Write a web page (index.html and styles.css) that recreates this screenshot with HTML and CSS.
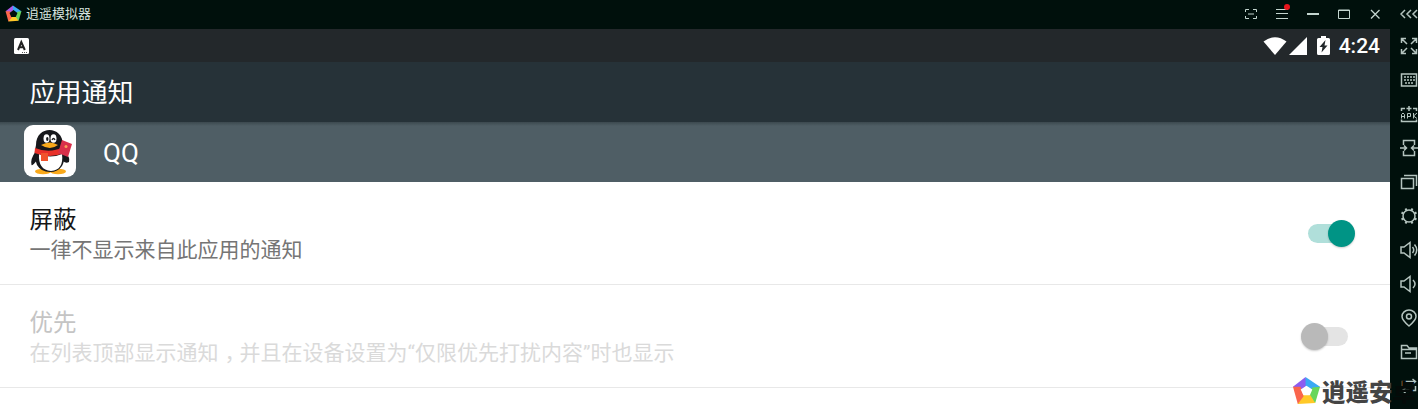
FILE: index.html
```html
<!DOCTYPE html>
<html lang="zh-CN">
<head>
  <meta charset="UTF-8" />
  <title>逍遥模拟器</title>
  <link rel="stylesheet" href="styles.css">
</head>
<body>

  <div id="emulator">
    <div id="main">
      <div id="titlebar">
        <svg class="logo" viewBox="0 0 30 30">
          <path fill="#ad5ae8" d="M14 1 L1 11 L9 15 L16 9 Z"/>
          <path fill="#39a9f4" d="M14 1 L29 11 L23 17 L14 9 Z"/>
          <path fill="#67d65a" d="M29 11 L24 28 L16 23 L22 12 Z"/>
          <path fill="#ffc928" d="M24 28 L6 29 L8 20 L19 21 Z"/>
          <path fill="#fa654c" d="M6 29 L1 11 L9 11 L12 22 Z"/>
          <path fill="#00100c" d="M15 9 L22 14 L19 21 L11 21 L8 14 Z"/>
        </svg>
        <span class="name">逍遥模拟器</span>
        <div class="window-buttons">
          <svg viewBox="0 0 14 14"><path d="M1.500 5V2.500H5M9 2.500h3.500V5M12.500 9v2.500H9M5 11.500H1.500V9M4 7h6"/></svg>
          <svg viewBox="0 0 14 14"><path d="M1 2.500h12M1 6.500h12M1 11.500h12"/></svg>
          <svg viewBox="0 0 14 14"><path class="thick" d="M1 7h12"/></svg>
          <svg viewBox="0 0 14 14"><path d="M1.500 3h11v8.500h-11zM1.500 3.500h11"/></svg>
          <svg viewBox="0 0 14 14"><path class="cross" d="M3 3l8.500 8.500M11.500 3l-8.500 8.500"/></svg>
          <i class="dot"></i>
        </div>
      </div>

      <div id="statusbar">
        <svg class="input-icon" viewBox="0 0 15 16">
          <rect width="15" height="16" rx="1.500" fill="#fff"/>
          <path d="M4 12 L7.300 4 L10.800 12 M5.300 9.200h4" fill="none" stroke="#222" stroke-width="2"/>
          <path d="M8 14.500h1M10 14.500h1M12 14.500h1" stroke="#555"/>
        </svg>
        <div class="status-icons">
          <svg width="24" height="18" viewBox="0 0 24 18"><path d="M0.500 4.500 Q12 -4 23.500 4.500 L12 18 Z"/></svg>
          <svg width="18" height="18" viewBox="0 0 18 18"><path d="M18 0V18H0Z"/></svg>
          <svg class="battery" width="13" height="19" viewBox="0 0 13 19">
            <path d="M4 0h5v2h2.500q1.500 0 1.500 1.500V17.500q0 1.500-1.500 1.500h-10Q0 19 0 17.500V3.500Q0 2 1.500 2H4z"/>
            <path fill="#23282b" d="M8.500 4 L2.500 11H5.500L4.500 16.500L10.500 9.500H7.500Z"/>
          </svg>
          <span>4:24</span>
        </div>
      </div>

      <div id="header">应用通知</div>

      <div id="app">
        <svg class="app-icon" viewBox="0 0 52 52">
          <rect width="52" height="52" rx="9" fill="#fff"/>
          <ellipse cx="19" cy="46.500" rx="8" ry="2.700" fill="#f9a91b"/>
          <ellipse cx="34" cy="46.500" rx="8" ry="2.700" fill="#f9a91b"/>
          <path fill="#17181c" d="M12 26Q6 34 7.500 40Q9 41 13 35zM39 26Q47 32 45 37Q42 39 39 36z"/>
          <path fill="#17181c" d="M12 20C12 0 39 0 39 20C42 27 41 36 38 41Q34 47 26 47Q17 47 13 40Q9 31 12 20z"/>
          <path fill="#fff" d="M15 29Q26 34 38 29Q40 45 27 46Q14 45 15 29z"/>
          <ellipse cx="22.500" cy="13.500" rx="3" ry="4.300" fill="#fff"/>
          <ellipse cx="29.500" cy="13.500" rx="3" ry="4.300" fill="#fff"/>
          <ellipse cx="23.300" cy="14" rx="1.200" ry="2" fill="#17181c"/>
          <path d="M28 15q1.500-3 3 0" fill="none" stroke="#17181c" stroke-width="1.300"/>
          <path fill="#f9a91b" d="M17 20Q26 15 34 20Q26 26 17 20z"/>
          <path fill="#e83029" d="M11 23Q26 29 39 22L40 28Q26 34 10.500 28z"/>
          <path fill="#f0532d" d="M17 28h7v8h-7z"/>
          <path fill="#d9304b" d="M38 15L48 19L44 32L34 28z"/>
          <circle cx="42" cy="21.500" r="1.500" fill="#f9a05b"/>
        </svg>
        <span>QQ</span>
      </div>

      <div class="setting">
        <div class="text">
          <div class="label">屏蔽</div>
          <div class="summary">一律不显示来自此应用的通知</div>
        </div>
        <div class="switch on"></div>
      </div>
      <div class="setting disabled">
        <div class="text">
          <div class="label">优先</div>
          <div class="summary">在列表顶部显示通知<span class="comma">，</span>并且在设备设置为“仅限优先打扰内容”时也显示</div>
        </div>
        <div class="switch"></div>
      </div>
    </div>

    <div id="sidebar">
      <svg class="collapse" viewBox="0 0 18 18"><path d="M5 5L1 9l4 4M11 5L7 9l4 4M17 5l-4 4 4 4"/></svg>
      <!-- pantalla completa -->
      <svg viewBox="0 0 18 18"><path d="M1.500 6V1.500H6M1.500 1.500L7 7M12 1.500h4.500V6M16.500 1.500L11 7M16.500 12v4.500H12M16.500 16.500L11 11M6 16.500H1.500V12M1.500 16.500L7 11"/></svg>
      <!-- teclado -->
      <svg viewBox="0 0 18 18"><path d="M1.500 3h15v12h-15z"/><path class="keys" d="M4 6h11M4 9h11M5 12h8"/></svg>
      <!-- apk -->
      <svg viewBox="0 0 18 18"><path d="M1.500 6V3.500H5M13 3.500h3.500V6M9 1v5M6.500 3.500h5M1.500 14.500v2h15v-2"/><path class="thin" d="M1.500 13.500V9.500L3 8l1.500 1.500v4M1.500 11.500h3M7.500 13.500v-5h3v3h-3M13.500 8v5.500M17 8l-3.500 3L17 13.500"/></svg>
      <svg viewBox="0 0 18 18"><path d="M3.500 6V1.500h11V6M3.500 12v4.500h11V12M0 9h6M4 6.500L6.500 9 4 11.500M18 9h-6M14 6.500L11.500 9l2.500 2.500"/></svg>
      <svg viewBox="0 0 18 18"><path d="M1.500 5.500h12v10h-12zM4 2.500h12.500V13"/></svg>
      <!-- ajustes -->
      <svg viewBox="0 0 18 18"><circle cx="9" cy="9" r="6"/><path class="teeth" d="M6.500 3.500L5.500 1.500M11.500 3.500L12.500 1.500M14.500 6.500L16.500 5.500M14.500 11.500L16.500 12.500M11.500 14.500L12.500 16.500M6.500 14.500L5.500 16.500M3.500 11.500L1.500 12.500M3.500 6.500L1.500 5.500"/></svg>
      <!-- volumen -->
      <svg viewBox="0 0 18 18"><path d="M1 6H4L10 1.500V16.500L4 12H1ZM12.500 6q2.500 3 0 6M14.500 3.500q4.500 5.500 0 11"/></svg>
      <svg viewBox="0 0 18 18"><path d="M1 6H4L10 1.500V16.500L4 12H1ZM13 5q4 4 0 8"/></svg>
      <svg viewBox="0 0 18 18"><path d="M9 17Q2 11 2 7.500A7 6.500 0 0 1 16 7.500Q16 11 9 17Z"/><circle cx="9" cy="7.500" r="2.500"/></svg>
      <svg viewBox="0 0 18 18"><path d="M1.500 15.500V2.500H7L9 5h7.500v10.500zM1.500 6.500h15M5 10h6"/></svg>
      <svg viewBox="0 0 18 18"><path d="M2.500 9V4.500H15M12.500 2L15.500 4.500L12.500 7M15.500 9v4.500H3M5.500 11L2.500 13.500L5.500 16"/></svg>
    </div>

    <div id="watermark">
      <svg viewBox="0 0 30 30">
        <path fill="#8d5df0" d="M14 1 L1 11 L9 16 L16 9 Z"/>
        <path fill="#39a9f4" d="M14 1 L29 11 L22 18 L14 10 Z"/>
        <path fill="#67d65a" d="M29 11 L24 28 L15 23 L21 12 Z"/>
        <path fill="#ffc928" d="M24 28 L6 29 L8 19 L19 20 Z"/>
        <path fill="#fa654c" d="M6 29 L1 11 L9 11 L12 21 Z"/>
        <path fill="#fff" d="M15 10 L21 14 L18.500 20 L12 20 L9 14 Z"/>
      </svg>
      <span>逍遥安</span><span class="last">卓</span>
    </div>
  </div>

</body>
</html>
```

FILE: styles.css
```css
* {
  box-sizing: border-box;
}
body {
  margin: 0;
  background: #fff;
  font-family: Roboto, "Noto Sans CJK SC", sans-serif;
}
#emulator {
  position: relative;
  display: flex;
  height: 409px;
  overflow: hidden;
}
#main {
  flex: 1;
}
#titlebar {
  display: flex;
  align-items: center;
  height: 29px;
  padding: 0 0 2px 5px;
  background: #00100c;
  color: #d5e2de;
  font-size: 13px;
}
#titlebar .logo {
  width: 17px;
  height: 17px;
  margin-right: 4px;
}
#titlebar .name {
  line-height: 27px;
}
.window-buttons {
  position: relative;
  display: flex;
  gap: 17px;
  margin-left: auto;
  padding-right: 8px;
}
.window-buttons svg {
  width: 14px;
  height: 14px;
  fill: none;
  stroke: #c3d5cf;
  stroke-width: 1;
}
.window-buttons .thick {
  stroke-width: 2;
}
.window-buttons .cross {
  stroke-width: 1.3;
}
.dot {
  position: absolute;
  top: -3px;
  left: 40px;
  width: 6px;
  height: 6px;
  border-radius: 50%;
  background: #e8141c;
}
#statusbar {
  display: flex;
  align-items: center;
  height: 33px;
  padding: 0 10px 0 14px;
  background: #23282b;
  color: #fff;
}
.input-icon {
  width: 15px;
  height: 16px;
}
.status-icons {
  display: flex;
  align-items: center;
  margin-left: auto;
  fill: #fff;
  font-size: 21px;
  font-weight: 500;
}
.status-icons svg {
  margin-right: 2px;
}
.status-icons .battery {
  margin: 0 9px 0 8px;
}
.status-icons span {
  line-height: 33px;
  padding-top: 2px;
}
#header {
  height: 60px;
  padding: 1px 0 0 29.5px;
  background: #263238;
  color: #fff;
  font-size: 26px;
  line-height: 60px;
}
#app {
  display: flex;
  align-items: center;
  height: 60px;
  padding: 0 0 2px 24px;
  background: linear-gradient(#3c494f, #4f5e65 4px);
  color: #fff;
  font-size: 26px;
}
#app span {
  padding-top: 3px;
}
.app-icon {
  width: 52px;
  height: 52px;
  margin-right: 27px;
}
.setting {
  display: flex;
  align-items: center;
  justify-content: space-between;
  height: 103px;
  padding: 0 35px 0 29.5px;
  border-bottom: 1px solid #e8e8e8;
}
.text {
  padding-top: 5px;
}
.label {
  color: #161616;
  font-size: 23.5px;
  line-height: 29px;
}
.summary {
  color: #757575;
  font-size: 21px;
  line-height: 31px;
}
.disabled .label {
  color: #c4c4c4;
}
.disabled .summary {
  color: #dadada;
}
.comma {
  padding: 0 4.5px 0 6px;
  font-feature-settings: "halt";
}
.switch {
  position: relative;
  width: 40px;
  height: 19px;
  margin-right: 7px;
  border-radius: 10px;
  background: #e4e4e4;
}
.switch::before {
  content: "";
  position: absolute;
  top: -4px;
  left: -7px;
  width: 27px;
  height: 27px;
  border-radius: 50%;
  background: #b9b9b9;
  box-shadow: 0 1px 2px rgba(0,0,0,0.2);
}
.switch.on {
  background: #b0dfda;
}
.switch.on::before {
  left: 20px;
  background: #009485;
}
#sidebar {
  display: flex;
  flex-direction: column;
  gap: 16px;
  width: 28px;
  padding: 5px 0 0 10px;
  background: #00100c;
}
#sidebar svg {
  flex: none;
  width: 18px;
  height: 18px;
  fill: none;
  stroke: #b4c4bf;
  stroke-width: 1.5;
}
#sidebar .collapse {
  margin-bottom: -2px;
}
#sidebar .keys {
  stroke-width: 1.5;
  stroke-dasharray: 2 1;
}
#sidebar .thin {
  stroke-width: 1;
}
#sidebar .teeth {
  stroke-width: 2;
}
#watermark {
  position: absolute;
  left: 1292px;
  top: 376px;
  display: flex;
  align-items: center;
  height: 29px;
  color: #444;
  font-size: 23.5px;
  font-weight: 900;
}
#watermark svg {
  width: 29px;
  height: 29px;
  margin-right: 1px;
}
#watermark .last {
  color: #050b09;
}
```
